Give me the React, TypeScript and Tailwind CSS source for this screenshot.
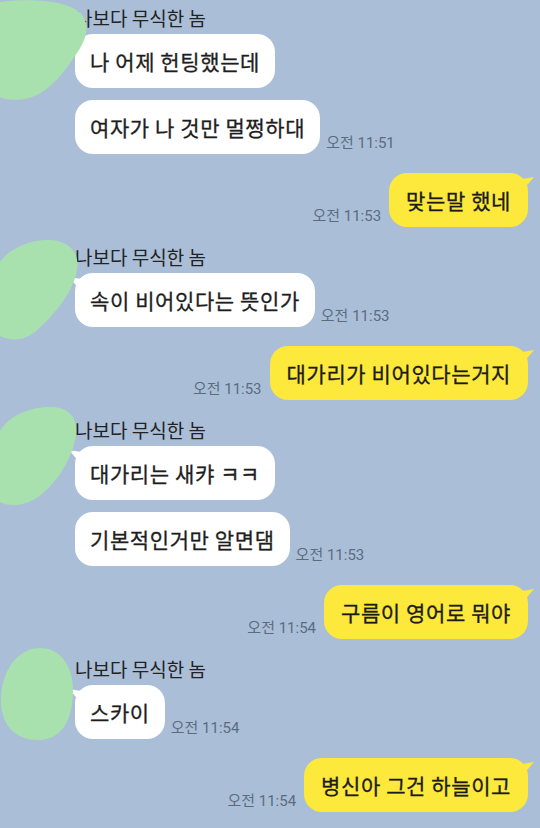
const FONT = "font-[Noto_Sans_CJK_KR,Noto_Sans,sans-serif]";

type Blob = { top: number; h: number; d: string };

function Avatar({ blob }: { blob: Blob }) {
  // 얼굴 가린 초록 낙서
  return (
    <svg
      className="pointer-events-none absolute left-0 z-10"
      style={{ top: blob.top }}
      width={100}
      height={blob.h}
      viewBox={`0 0 100 ${blob.h}`}
    >
      <path d={blob.d} fill="#a9e1ae" />
    </svg>
  );
}

function Time({ t }: { t: string }) {
  return (
    <span className="mb-[2px] shrink-0 font-[Roboto,Noto_Sans_CJK_KR,sans-serif] text-[15px] leading-[18px] text-[#5b6c7f]">
      {t}
    </span>
  );
}

function WhiteBubble({ text, tail, time }: { text: string; tail?: boolean; time?: string }) {
  return (
    <div className="flex items-end gap-[6px]">
      <div className="relative rounded-[18px] bg-white px-[15px] py-[15px] text-[21px] leading-[24px] tracking-[0.6px] text-[#1e1e1e] [-webkit-text-stroke:0.3px_#1e1e1e]">
        {tail && (
          <svg className="absolute left-[-6px] top-[4px]" width="12" height="14" viewBox="0 0 12 14">
            <path d="M0 0 L12 2 L12 14 Z" fill="#ffffff" />
          </svg>
        )}
        {text}
      </div>
      {time && <Time t={time} />}
    </div>
  );
}

function YellowBubble({ text, time }: { text: string; time: string }) {
  return (
    <div className="flex items-end justify-end gap-[8px] pr-[12px]">
      <Time t={time} />
      <div className="relative rounded-[18px] bg-[#fde83c] px-[17px] py-[15px] text-[21px] leading-[24px] tracking-[0.6px] text-[#1b1b1b] [-webkit-text-stroke:0.3px_#1b1b1b]">
        <svg className="absolute right-[-6px] top-[4px]" width="12" height="14" viewBox="0 0 12 14">
          <path d="M12 0 L0 2 L0 14 Z" fill="#fde83c" />
        </svg>
        {text}
      </div>
    </div>
  );
}

function Group({ blob, children }: { blob: Blob; children: React.ReactNode }) {
  return (
    <div className="relative flex">
      <Avatar blob={blob} />
      <div className="w-[75px] shrink-0" />
      <div className="flex flex-col gap-[12px]">
        <div className="-mb-[7px] text-[19px] leading-[22px] text-[#222]">나보다 무식한 놈</div>
        {children}
      </div>
    </div>
  );
}

const blobs: Blob[] = [
  { top: -7, h: 110, d: "M0 2 C30 -2 70 0 82 15 C92 28 84 45 72 60 C60 78 45 95 25 99 C12 101 4 99 0 97 Z" },
  { top: -10, h: 110, d: "M0 26 C10 12 30 4 48 4 C68 4 80 16 77 34 C74 54 55 79 35 96 C22 106 8 104 0 100 Z" },
  { top: -14, h: 110, d: "M0 26 C8 12 28 2 50 2 C68 2 78 12 76 29 C74 49 60 74 42 89 C30 99 15 102 5 99 L0 97 Z" },
  { top: -12, h: 100, d: "M40 2 C60 2 74 20 73 47 C72 74 62 94 38 94 C14 94 0 77 1 52 C2 24 18 2 40 2 Z" },
];

export default function App() {
  return (
    <main className={`h-[828px] w-[540px] overflow-hidden bg-[#aabfd7] pt-[7px] ${FONT}`}>
      <div className="flex flex-col gap-[19px]">
        <Group blob={blobs[0]}>
          <WhiteBubble text="나 어제 헌팅했는데" tail />
          <WhiteBubble text="여자가 나 것만 멀쩡하대" time="오전 11:51" />
        </Group>

        <YellowBubble text="맞는말 했네" time="오전 11:53" />

        <Group blob={blobs[1]}>
          <WhiteBubble text="속이 비어있다는 뜻인가" tail time="오전 11:53" />
        </Group>

        <YellowBubble text="대가리가 비어있다는거지" time="오전 11:53" />

        <Group blob={blobs[2]}>
          <WhiteBubble text="대가리는 새캬 ㅋㅋ" tail />
          <WhiteBubble text="기본적인거만 알면댐" time="오전 11:53" />
        </Group>

        <YellowBubble text="구름이 영어로 뭐야" time="오전 11:54" />

        <Group blob={blobs[3]}>
          <WhiteBubble text="스카이" tail time="오전 11:54" />
        </Group>

        <YellowBubble text="병신아 그건 하늘이고" time="오전 11:54" />
      </div>
    </main>
  );
}
